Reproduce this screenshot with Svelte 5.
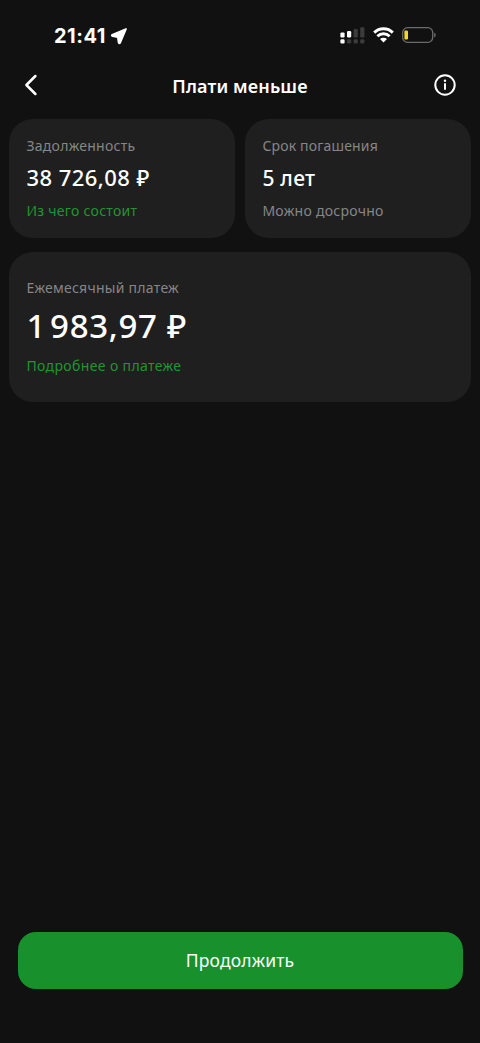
<script>
  const cards = [
    { name: 'debt', label: 'Задолженность', value: '38 726,08 ₽', note: 'Из чего состоит', link: true },
    { name: 'term', label: 'Срок погашения', value: '5 лет', note: 'Можно досрочно', link: false },
    { name: 'payment', label: 'Ежемесячный платеж', value: '1 983,97 ₽', note: 'Подробнее о платеже', link: true, wide: true },
  ];

  const signal = [
    { x: 0.4, y: 5.4, h: 5, on: true },
    { x: 7, y: 4, h: 6.4, on: true },
    { x: 13.6, y: 2, h: 8.6, on: false },
    { x: 20.2, y: 0.2, h: 10.4, on: false },
  ];
</script>

<div class="screen">
  <div class="status">
    <div class="clock">
      <span class="time">21:41</span>
      <svg width="18" height="18" viewBox="0 0 18 18">
        <path d="M16 2 2.2 7.8c-.6.4-.5 1.2.3 1.400l5.300.800.800 5.600c.2.8 1.100.9 1.500.2z" fill="#fff" stroke="#fff" stroke-width="1.8" stroke-linejoin="round" />
      </svg>
    </div>
    <div class="indicators">
      <svg class="signal" width="25" height="17" viewBox="0 0 25 17">
        {#each signal as bar}
          <rect x={bar.x} y={bar.y} width="4.2" height={bar.h} rx="1.2" fill={bar.on ? '#fff' : '#3c3c3c'} />
          <rect x={bar.x} y="12.2" width="4.2" height="4.4" rx="1.3" fill={bar.x < 1 ? '#fff' : '#3c3c3c'} />
        {/each}
      </svg>
      <svg class="wifi" width="21" height="16" viewBox="0 0 21 16">
        <g fill="none" stroke="#fff" stroke-width="2.9">
          <path d="M1.2 5.6a13.2 13.2 0 0 1 18.6 0" />
          <path d="M4.4 9.3a8.6 8.6 0 0 1 12.2 0" />
        </g>
        <path d="M10.5 15.6 7 12.1a4.9 4.9 0 0 1 7 0z" fill="#fff" />
      </svg>
      <svg class="battery" width="34" height="16" viewBox="0 0 34 16">
        <rect x=".7" y=".7" width="30" height="14.6" rx="4.8" fill="none" stroke="#6c6c6c" stroke-width="1.3" />
        <rect x="2.4" y="3.6" width="3.6" height="8.8" rx="1.2" fill="#f6d722" />
        <path d="M32.2 5.6c2 .7 2 4.1 0 4.8z" fill="#6c6c6c" />
      </svg>
    </div>
  </div>

  <header>
    <button class="icon" aria-label="Назад">
      <svg width="14" height="22" viewBox="0 0 14 22">
        <path d="M11.4 2 2.4 11l9 9" fill="none" stroke="#fff" stroke-width="2.5" stroke-linecap="round" stroke-linejoin="round" />
      </svg>
    </button>
    <h1>Плати меньше</h1>
    <button class="icon" aria-label="Информация">
      <svg width="22" height="22" viewBox="0 0 22 22">
        <circle cx="11" cy="11" r="9.7" fill="none" stroke="#fff" stroke-width="2" />
        <circle cx="11" cy="6.7" r="1.2" fill="#fff" />
        <path d="M11 10v5" stroke="#fff" stroke-width="2" stroke-linecap="round" />
      </svg>
    </button>
  </header>

  <main>
    {#each cards as card}
      <section class="card {card.name}" class:wide={card.wide}>
        <div class="label">{card.label}</div>
        <div class="value">{card.value}</div>
        <div class="note" class:link={card.link}>{card.note}</div>
      </section>
    {/each}
  </main>

  <footer>
    <button class="submit">Продолжить</button>
  </footer>
</div>

<style>
  :global(body) {
    margin: 0;
    background: #111;
  }

  .screen {
    display: flex;
    flex-direction: column;
    box-sizing: border-box;
    height: 1043px;
    color: #fff;
    background: #111;
    font-family: "Noto Sans", sans-serif;
  }

  button {
    padding: 0;
    border: 0;
    color: inherit;
    background: none;
    font-family: inherit;
  }

  svg {
    display: block;
  }

  .status {
    display: flex;
    justify-content: space-between;
    align-items: center;
    height: 60px;
    padding: 10px 44px 0 54px;
    box-sizing: border-box;
  }

  .clock, .indicators {
    display: flex;
    align-items: center;
  }

  .clock {
    gap: 4px;
    padding-top: 1px;
  }

  .time {
    font-family: Inter, sans-serif;
    font-size: 20px;
    font-weight: 700;
    line-height: 24px;
    letter-spacing: 0.5px;
  }

  .wifi {
    margin: 0 8px;
  }

  header {
    display: flex;
    justify-content: space-between;
    align-items: center;
    height: 50px;
    padding: 0 24px;
  }

  .icon {
    display: flex;
    width: 22px;
  }

  h1 {
    margin: 1px 0 0;
    font-size: 18px;
    font-weight: 600;
    line-height: 24px;
    letter-spacing: 0.12px;
  }

  main {
    display: grid;
    grid-template-columns: 1fr 1fr;
    gap: 14px 10px;
    padding: 8.6px 9px 0;
  }

  .card {
    box-sizing: border-box;
    height: 119px;
    padding: 17.4px 17.4px 0;
    border-radius: 24px;
    background: #1f1f1f;
  }

  .label, .note {
    color: #868686;
    font-size: 14px;
    line-height: 20px;
    letter-spacing: 0.27px;
    white-space: nowrap;
  }

  .term .label {
    letter-spacing: 0.17px;
  }

  .value {
    margin: 10px 0 11px;
    font-size: 21px;
    font-weight: 500;
    line-height: 24px;
    white-space: nowrap;
  }

  .debt .value {
    margin: 9px 0 12px;
    font-size: 22px;
    letter-spacing: 0.45px;
  }

  .term .value {
    letter-spacing: 0.25px;
  }

  .wide {
    grid-column: 1 / 3;
    height: 150px;
    padding-top: 26.4px;
  }

  .wide .value {
    margin: 9px 0 11px;
    font-size: 33px;
    line-height: 38px;
    letter-spacing: 0.7px;
  }

  /* the leading 1 sits tight against the thousands */
  .wide .value::first-letter {
    letter-spacing: -4.5px;
  }

  .wide .note {
    letter-spacing: 0.37px;
  }

  .note.link {
    color: #21962f;
  }

  footer {
    margin-top: auto;
    padding: 0 17.5px 54.5px;
  }

  .submit {
    display: block;
    width: 100%;
    height: 56.5px;
    border-radius: 18px;
    background: #18912d;
    font-size: 17.5px;
    font-weight: 450;
    letter-spacing: 0.15px;
  }
</style>
